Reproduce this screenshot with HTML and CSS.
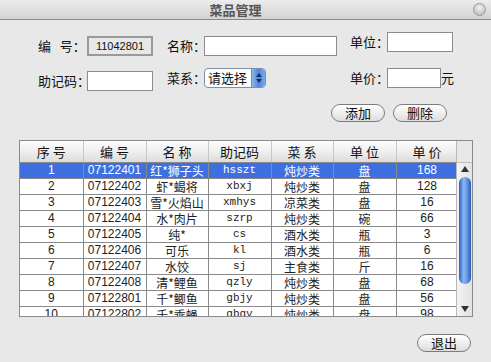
FILE: index.html
```html
<!DOCTYPE html>
<html lang="zh">
<head>
  <meta charset="UTF-8" />
  <title>菜品管理</title>
  <link rel="stylesheet" href="styles.css">
</head>
<body>

<div class="titlebar">
  <span class="title">菜品管理</span>
  <span class="win-btn"></span>
</div>

<div class="form">
  <div class="col col1">
    <div class="field">
      <label>编&nbsp;&nbsp;&nbsp;号：</label>
      <div class="box readonly">11042801</div>
    </div>
    <div class="field row2">
      <label>助记码：</label>
      <div class="box"></div>
    </div>
  </div>

  <div class="col col2">
    <div class="field">
      <label>名称：</label>
      <div class="box wide"></div>
    </div>
    <div class="field row2">
      <label>菜系：</label>
      <div class="select">
        <span class="select-text">请选择</span>
        <span class="select-arrow">
          <svg width="8" height="12" viewBox="0 0 8 12"><path d="M4 1 L7 5 L1 5 Z M4 11 L7 7 L1 7 Z" fill="#1a2f60"/></svg>
        </span>
      </div>
    </div>
  </div>

  <div class="col col3">
    <div class="field">
      <label>单位：</label>
      <div class="box"></div>
    </div>
    <div class="field row2">
      <label>单价：</label>
      <div class="box price"></div>
      <span class="unit">元</span>
    </div>
    <div class="actions">
      <button class="pill">添加</button>
      <button class="pill">删除</button>
    </div>
  </div>
</div>

<div class="grid-frame">
  <div class="grid-main">
    <table class="grid">
      <colgroup>
        <col style="width:63px"><col style="width:63px"><col style="width:62px"><col style="width:63px">
        <col style="width:62px"><col style="width:63px"><col style="width:62px">
      </colgroup>
      <thead>
        <tr><th>序 号</th><th>编 号</th><th>名 称</th><th>助记码</th><th>菜 系</th><th>单 位</th><th>单 价</th></tr>
      </thead>
      <tbody>
        <tr class="selected"><td class="num">1</td><td class="num">07122401</td><td>红*狮子头</td><td class="mono">hsszt</td><td>炖炒类</td><td>盘</td><td class="num">168</td></tr>
        <tr><td class="num">2</td><td class="num">07122402</td><td>虾*蝎将</td><td class="mono">xbxj</td><td>炖炒类</td><td>盘</td><td class="num">128</td></tr>
        <tr><td class="num">3</td><td class="num">07122403</td><td>雪*火焰山</td><td class="mono">xmhys</td><td>凉菜类</td><td>盘</td><td class="num">16</td></tr>
        <tr><td class="num">4</td><td class="num">07122404</td><td>水*肉片</td><td class="mono">szrp</td><td>炖炒类</td><td>碗</td><td class="num">66</td></tr>
        <tr><td class="num">5</td><td class="num">07122405</td><td>纯*</td><td class="mono">cs</td><td>酒水类</td><td>瓶</td><td class="num">3</td></tr>
        <tr><td class="num">6</td><td class="num">07122406</td><td>可乐</td><td class="mono">kl</td><td>酒水类</td><td>瓶</td><td class="num">6</td></tr>
        <tr><td class="num">7</td><td class="num">07122407</td><td>水饺</td><td class="mono">sj</td><td>主食类</td><td>斤</td><td class="num">16</td></tr>
        <tr><td class="num">8</td><td class="num">07122408</td><td>清*鲤鱼</td><td class="mono">qzly</td><td>炖炒类</td><td>盘</td><td class="num">68</td></tr>
        <tr><td class="num">9</td><td class="num">07122801</td><td>千*鲫鱼</td><td class="mono">gbjy</td><td>炖炒类</td><td>盘</td><td class="num">56</td></tr>
        <tr><td class="num">10</td><td class="num">07122802</td><td>千*乖蝇</td><td class="mono">gbgy</td><td>炖炒类</td><td>盘</td><td class="num">98</td></tr>
      </tbody>
    </table>
  </div>
  <div class="scrollbar">
    <div class="sb-head"></div>
    <div class="sb-up">
      <svg width="8" height="6" viewBox="0 0 8 6"><path d="M4 0 L8 6 L0 6 Z" fill="#333"/></svg>
    </div>
    <div class="sb-thumb"></div>
    <div class="sb-down">
      <svg width="8" height="6" viewBox="0 0 8 6"><path d="M0 0 L8 0 L4 6 Z" fill="#333"/></svg>
    </div>
  </div>
</div>

<div class="footer">
  <button class="pill">退出</button>
</div>

</body>
</html>
```

FILE: styles.css
```css
body {
  margin: 0;
  background: #e8e8e8;
  font-family: "Noto Sans CJK SC", "Liberation Sans", sans-serif;
  font-size: 13px;
  color: #111;
  width: 491px;
  height: 362px;
  overflow: hidden;
}

.titlebar {
  height: 19px;
  border-bottom: 1px solid #8a8a8a;
  background: linear-gradient(#ececec, #d3d3d3);
  display: flex;
  align-items: center;
  justify-content: center;
  position: relative;
  padding-right: 20px;
}

.title {
  font-weight: bold;
  color: #555;
  font-size: 13px;
}

.win-btn {
  position: absolute;
  right: 5px;
  top: 3px;
  width: 13px;
  height: 13px;
  border-radius: 50%;
  border: 1px solid #9a9a9a;
  box-sizing: border-box;
  background: radial-gradient(circle at 50% 35%, #f4f4f4, #c4c4c4 70%, #b0b0b0);
}

.form {
  display: flex;
  padding-left: 38px;
}

.col {
  display: flex;
  flex-direction: column;
}

.col1 {
  width: 115px;
  margin-top: 16px;
}

.col1 .row2 {
  margin-top: 15px;
}

.col1 label {
  width: 49px;
}

.col2 {
  width: 170px;
  margin-left: 14px;
  margin-top: 16px;
}

.col2 .row2 {
  margin-top: 12px;
}

.col2 label,
.col3 label {
  width: 37px;
}

.col3 {
  margin-left: 13px;
  margin-top: 12px;
}

.col3 .row2 {
  margin-top: 16px;
}

.field {
  display: flex;
  align-items: center;
  height: 20px;
}

label {
  white-space: nowrap;
  line-height: 20px;
}

.box {
  width: 66px;
  height: 20px;
  box-sizing: border-box;
  border: 1px solid #8c8c8c;
  background: #fff;
  font-family: "Liberation Sans", sans-serif;
  font-size: 11px;
  display: flex;
  align-items: center;
  justify-content: center;
}

.box.readonly {
  background: #e8e8e8;
  border: 2px solid #9a9a9a;
}

.box.wide {
  width: 133px;
}

.box.price {
  width: 54px;
}

.unit {
  line-height: 20px;
}

.select {
  display: flex;
  width: 62px;
  height: 20px;
  box-sizing: border-box;
  border: 1px solid #8090a8;
  border-radius: 4px;
  background: #fff;
  overflow: hidden;
}

.select-text {
  flex: 1;
  font-size: 13px;
  line-height: 18px;
  padding-left: 3px;
}

.select-arrow {
  width: 13px;
  background: linear-gradient(90deg, #8fb4ec, #4f87dd 50%, #7aa8ea);
  border-left: 1px solid #6f8fc4;
  display: flex;
  align-items: center;
  justify-content: center;
}

.actions {
  display: flex;
  gap: 8px;
  margin-top: 16px;
  margin-left: -19px;
}

.pill {
  width: 54px;
  height: 18px;
  padding: 0;
  border: 1px solid #7c7c7c;
  border-radius: 9px;
  background: linear-gradient(#ffffff, #eeeeee 50%, #dedede);
  font-family: "Noto Sans CJK SC", sans-serif;
  font-size: 13px;
  line-height: 16px;
  color: #111;
}

.grid-frame {
  margin: 18px 0 0 19px;
  width: 454px;
  height: 177px;
  box-sizing: border-box;
  border: 1px solid #8a8a8a;
  display: flex;
  background: #fff;
}

.grid-main {
  width: 438px;
  overflow: hidden;
}

.grid {
  border-collapse: collapse;
  table-layout: fixed;
  width: 438px;
}

.grid th {
  height: 21px;
  padding: 0;
  font-weight: normal;
  font-size: 13px;
  border-right: 1px solid #c8c8c8;
  border-bottom: 1px solid #8a8a8a;
  background: linear-gradient(#fdfdfd, #f0f0f0 45%, #dcdcdc);
}

.grid td {
  height: 15px;
  padding: 0;
  text-align: center;
  font-size: 12px;
  line-height: 15px;
  border-right: 1px solid #8a8a8a;
  border-bottom: 1px solid #8a8a8a;
  white-space: nowrap;
  overflow: hidden;
  color: #222;
}

.grid td.num {
  font-family: "Liberation Sans", sans-serif;
  font-size: 12px;
}

.grid td.mono {
  font-family: "Liberation Mono", monospace;
  font-size: 11px;
}

.grid tr.selected td {
  background: #3e6fe0;
  color: #fff;
}

.scrollbar {
  width: 15px;
  display: flex;
  flex-direction: column;
  align-items: center;
  background: linear-gradient(90deg, #f4f4f4, #e2e2e2);
  border-left: 1px solid #b8b8b8;
}

.sb-head {
  width: 100%;
  height: 22px;
  background: #e8e8e8;
  border-bottom: 1px solid #c0c0c0;
  box-sizing: border-box;
}

.sb-up {
  height: 12px;
  display: flex;
  align-items: center;
}

.sb-thumb {
  width: 12px;
  height: 107px;
  border-radius: 6px;
  background: linear-gradient(90deg, #2d5fbf, #8cb8f2 40%, #5d92e0 70%, #2c5bb8);
  margin-top: 2px;
}

.sb-down {
  margin-top: auto;
  height: 14px;
  display: flex;
  align-items: center;
}

.footer {
  display: flex;
  justify-content: flex-end;
  padding-right: 20px;
  margin-top: 17px;
}
```
